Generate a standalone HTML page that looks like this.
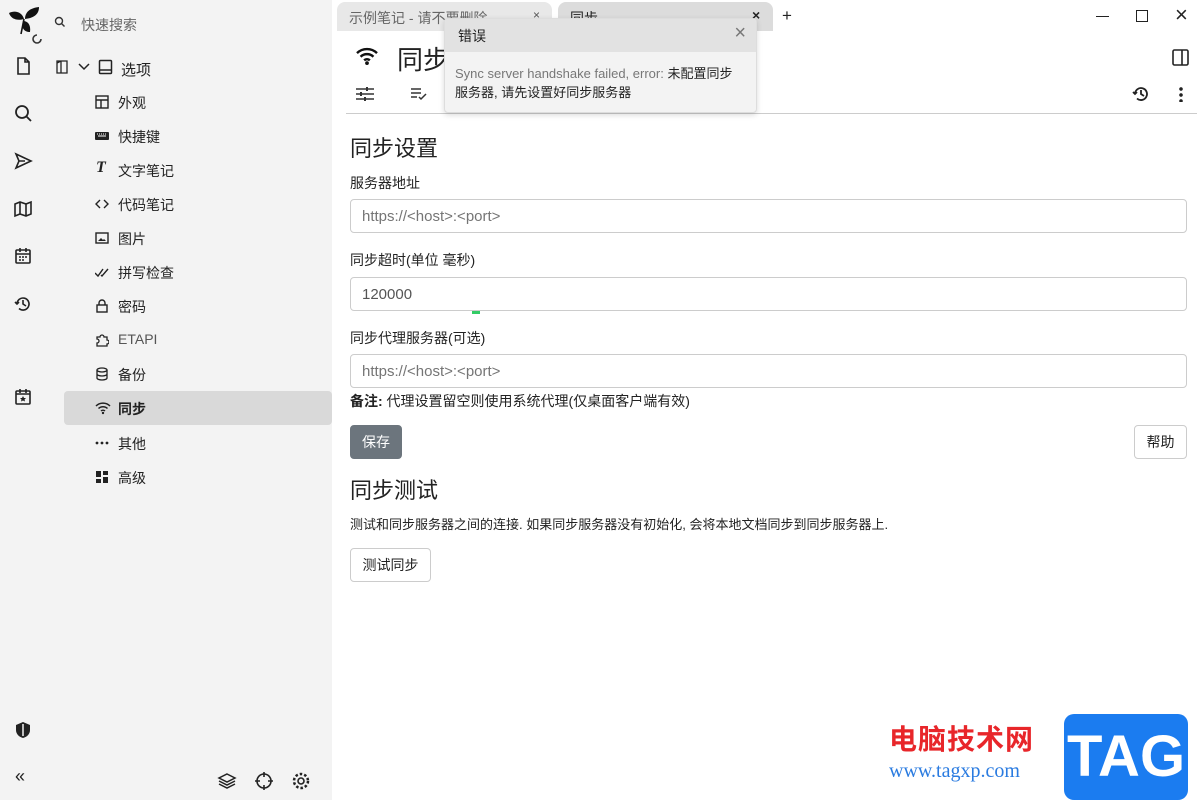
<!DOCTYPE html>
<html><head><meta charset="utf-8"><style>
*{box-sizing:border-box;margin:0;padding:0}
body{width:1200px;height:800px;overflow:hidden;background:#fff;font-family:"Liberation Sans","Noto Sans CJK SC",sans-serif;color:#222;position:relative;font-size:14px}
.side{position:absolute;left:0;top:0;width:332px;height:800px;background:#f3f3f3}
.ic{position:absolute;left:13px;width:20px;height:20px}
.t{position:absolute;font-size:14px;color:#222}
.item{position:absolute;left:64px;width:268px;height:34px}
.item svg{position:absolute;left:31px;top:10px}
.item span{position:absolute;left:54px;top:8px;font-size:14px}
.tab{position:absolute;top:2px;height:29px;border-radius:8px 8px 0 0;font-size:14px}
input{position:absolute;left:350px;width:837px;height:34px;border:1px solid #ccc;border-radius:4px;padding:0 11px;font-size:15px;font-family:inherit;color:#555}
.lbl{position:absolute;left:350px;font-size:14px}
.btn{position:absolute;border:1px solid #ccc;border-radius:4px;font-size:14px;text-align:center;background:#fff}
</style></head><body>
<div class="side">
 <svg style="position:absolute;left:8px;top:5px" width="38" height="42" viewBox="0 0 38 42"><path d="M1 8c6-3 13-1 15 6-7 2-13 0-15-6z" fill="#111"/><path d="M17 14c0-7 5-11 14-12 0 8-6 11-14 12z" fill="#111"/><path d="M15 16c5 0 8 4 7 11-6 0-9-4-7-11z" fill="#111"/><path d="M16 14l-3 15" stroke="#111" stroke-width="1.6"/><path d="M33 34a4 4 0 1 1-4-4M25 34a4 4 0 0 0 4 4" fill="none" stroke="#333" stroke-width="1.6"/></svg>
 <svg style="position:absolute;left:54px;top:16px" width="12" height="12" viewBox="0 0 12 12"><circle cx="5" cy="5" r="3.5" fill="none" stroke="#333" stroke-width="1.4"/><path d="M7.5 7.5l3 3" stroke="#333" stroke-width="1.4"/></svg>
 <div class="t" style="left:81px;top:15px;color:#666">快速搜索</div>
 <svg class="ic" style="top:56px" viewBox="0 0 20 20"><path d="M5 2h7l4 4v12H5z M12 2v4h4" fill="none" stroke="#222" stroke-width="1.6"/></svg>
 <svg class="ic" style="top:103px" viewBox="0 0 20 20"><circle cx="9" cy="9" r="6" fill="none" stroke="#222" stroke-width="1.8"/><path d="M13 13l5 5" stroke="#222" stroke-width="1.8"/></svg>
 <svg class="ic" style="top:151px" viewBox="0 0 20 20"><path d="M3 3l15 7-15 7 3-7z M6 10h6" fill="none" stroke="#222" stroke-width="1.6"/></svg>
 <svg class="ic" style="top:199px" viewBox="0 0 20 20"><path d="M2 5l5-2 6 2 5-2v12l-5 2-6-2-5 2z M7 3v12 M13 5v12" fill="none" stroke="#222" stroke-width="1.6"/></svg>
 <svg class="ic" style="top:246px" viewBox="0 0 20 20"><rect x="3" y="4" width="14" height="13" rx="1" fill="none" stroke="#222" stroke-width="1.6"/><path d="M3 8h14M7 2v4M13 2v4" stroke="#222" stroke-width="1.6"/><path d="M6 11h2M9 11h2M12 11h2M6 14h2M9 14h2" stroke="#222" stroke-width="1.4"/></svg>
 <svg class="ic" style="top:294px" viewBox="0 0 20 20"><path d="M4 10a6 6 0 1 1 2 4.5 M2 8l2 2 2-2 M10 6v4l3 2" fill="none" stroke="#222" stroke-width="1.6"/></svg>
 <svg class="ic" style="top:387px" viewBox="0 0 20 20"><rect x="3" y="4" width="14" height="13" rx="1" fill="none" stroke="#222" stroke-width="1.6"/><path d="M3 7h14M7 2v4M13 2v4" stroke="#222" stroke-width="1.6"/><path d="M10 9l1 2h2l-1.5 1.5.5 2-2-1-2 1 .5-2L7 11h2z" fill="#222"/></svg>
 <svg class="ic" style="top:720px" viewBox="0 0 20 20"><path d="M10 2l7 3v5c0 4-3 7-7 8-4-1-7-4-7-8V5z" fill="#222"/><path d="M10 4v12" stroke="#f3f3f3" stroke-width="1.5"/></svg>
 <div class="t" style="left:15px;top:766px;font-size:18px">«</div>
 <svg style="position:absolute;left:217px;top:771px" width="20" height="20" viewBox="0 0 20 20"><path d="M10 3l8 4-8 4-8-4z M2 10l8 4 8-4 M2 13l8 4 8-4" fill="none" stroke="#222" stroke-width="1.5"/></svg>
 <svg style="position:absolute;left:254px;top:771px" width="20" height="20" viewBox="0 0 20 20"><circle cx="10" cy="10" r="7" fill="none" stroke="#222" stroke-width="1.6"/><path d="M10 1v5M10 14v5M1 10h5M14 10h5" stroke="#222" stroke-width="1.6"/></svg>
 <svg style="position:absolute;left:291px;top:771px" width="20" height="20" viewBox="0 0 20 20"><circle cx="10" cy="10" r="3" fill="none" stroke="#222" stroke-width="1.6"/><circle cx="10" cy="10" r="7" fill="none" stroke="#222" stroke-width="2.5" stroke-dasharray="2.5 2"/></svg>
 <svg style="position:absolute;left:56px;top:60px" width="12" height="14" viewBox="0 0 12 14"><path d="M1 1h10v12H1z M5 1v12 M5 1l-4 2v10" fill="none" stroke="#222" stroke-width="1.3"/></svg>
 <svg style="position:absolute;left:78px;top:63px" width="12" height="8" viewBox="0 0 12 8"><path d="M1 1l5 5 5-5" fill="none" stroke="#222" stroke-width="1.5"/></svg>
 <svg style="position:absolute;left:98px;top:59px" width="15" height="16" viewBox="0 0 15 16"><rect x="1.5" y="1.5" width="12" height="13" rx="1" fill="none" stroke="#222" stroke-width="1.5"/><path d="M1.5 11h12" stroke="#222" stroke-width="1.5"/></svg>
 <div class="t" style="left:121px;top:59px;font-size:15px">选项</div>
 <div class="item" style="top:85px"><svg width="14" height="14" viewBox="0 0 14 14"><rect x="1" y="1" width="12" height="12" fill="none" stroke="#222" stroke-width="1.4"/><path d="M1 5h12M6 5v8" stroke="#222" stroke-width="1.4"/></svg><span>外观</span></div>
 <div class="item" style="top:119px"><svg width="14" height="14" viewBox="0 0 14 14"><rect x="0" y="3" width="14" height="8" rx="1" fill="#222"/><path d="M2 5h1M4 5h1M6 5h1M8 5h1M10 5h1M3 7h8" stroke="#fff"/></svg><span>快捷键</span></div>
 <div class="item" style="top:153px"><span style="left:32px;top:6px;font-family:'Liberation Serif';font-style:italic;font-weight:bold;font-size:16px">T</span><span>文字笔记</span></div>
 <div class="item" style="top:187px"><svg width="14" height="14" viewBox="0 0 14 14"><path d="M5 3L1 7l4 4M9 3l4 4-4 4" fill="none" stroke="#222" stroke-width="1.4"/></svg><span>代码笔记</span></div>
 <div class="item" style="top:221px"><svg width="14" height="14" viewBox="0 0 14 14"><rect x="1" y="2" width="12" height="10" fill="none" stroke="#222" stroke-width="1.4"/><path d="M3 10l3-3 2 2 1-1 2 2z" fill="#222"/></svg><span>图片</span></div>
 <div class="item" style="top:255px"><svg width="16" height="14" viewBox="0 0 16 14"><path d="M0 8l3 3 5-7M6 10l1 1 6-7" fill="none" stroke="#222" stroke-width="1.4"/></svg><span>拼写检查</span></div>
 <div class="item" style="top:289px"><svg width="14" height="14" viewBox="0 0 14 14"><rect x="2" y="6" width="10" height="7" fill="none" stroke="#222" stroke-width="1.4"/><path d="M4 6V4a3 3 0 0 1 6 0v2" fill="none" stroke="#222" stroke-width="1.4"/></svg><span>密码</span></div>
 <div class="item" style="top:323px"><svg width="14" height="14" viewBox="0 0 14 14"><path d="M2 4h3a2 2 0 0 1 4 0h3v3a2 2 0 0 1 0 4v2H2v-3a2 2 0 0 0 0-4z" fill="none" stroke="#222" stroke-width="1.3"/></svg><span style="color:#555">ETAPI</span></div>
 <div class="item" style="top:357px"><svg width="14" height="14" viewBox="0 0 14 14"><ellipse cx="7" cy="3" rx="5" ry="2" fill="none" stroke="#222" stroke-width="1.3"/><path d="M2 3v8c0 1 2 2 5 2s5-1 5-2V3M2 7c0 1 2 2 5 2s5-1 5-2" fill="none" stroke="#222" stroke-width="1.3"/></svg><span>备份</span></div>
 <div class="item" style="top:391px;background:#d9d9d9;border-radius:4px"><svg width="16" height="14" viewBox="0 0 16 14"><path d="M1 5a10 10 0 0 1 14 0M3.5 7.5a6.5 6.5 0 0 1 9 0M6 10a3 3 0 0 1 4 0" fill="none" stroke="#222" stroke-width="1.5"/><circle cx="8" cy="12" r="1.2" fill="#222"/></svg><span style="font-weight:bold">同步</span></div>
 <div class="item" style="top:426px"><svg width="14" height="14" viewBox="0 0 14 14"><circle cx="2" cy="7" r="1.4" fill="#222"/><circle cx="7" cy="7" r="1.4" fill="#222"/><circle cx="12" cy="7" r="1.4" fill="#222"/></svg><span>其他</span></div>
 <div class="item" style="top:460px"><svg width="14" height="14" viewBox="0 0 14 14"><rect x="1" y="1" width="5" height="6" fill="#222"/><rect x="8" y="1" width="5" height="4" fill="#222"/><rect x="1" y="9" width="5" height="4" fill="#222"/><rect x="8" y="7" width="5" height="6" fill="#222"/></svg><span>高级</span></div>
</div>
<div class="tab" style="left:337px;width:215px;background:#e8e8e8"><span style="position:absolute;left:12px;top:6px;color:#666">示例笔记 - 请不要删除</span><span style="position:absolute;left:196px;top:6px;font-size:12px;color:#555">×</span></div>
<div class="tab" style="left:558px;width:215px;background:#dcdcdc"><span style="position:absolute;left:12px;top:6px">同步</span><span style="position:absolute;left:194px;top:5px;font-size:14px;font-weight:bold">×</span></div>
<div class="t" style="left:782px;top:6px;font-size:17px">+</div>
<div style="position:absolute;left:1096px;top:16px;width:13px;border-top:1.5px solid #222"></div>
<div style="position:absolute;left:1136px;top:10px;width:12px;height:12px;border:1.5px solid #222"></div>
<div class="t" style="left:1175px;top:2px;font-size:22px">×</div>
<svg style="position:absolute;left:355px;top:46px" width="24" height="20" viewBox="0 0 16 14"><path d="M1 5a10 10 0 0 1 14 0M3.5 7.5a6.5 6.5 0 0 1 9 0M6 10a3 3 0 0 1 4 0" fill="none" stroke="#111" stroke-width="1.7"/><circle cx="8" cy="12" r="1.3" fill="#111"/></svg>
<div class="t" style="left:397px;top:40px;font-size:26px">同步</div>
<svg style="position:absolute;left:1172px;top:49px" width="17" height="17" viewBox="0 0 17 17"><rect x="1" y="1" width="15" height="15" rx="1.5" fill="none" stroke="#222" stroke-width="1.6"/><path d="M10 1v15" stroke="#222" stroke-width="1.6"/></svg>
<svg style="position:absolute;left:355px;top:85px" width="20" height="18" viewBox="0 0 20 18"><path d="M1 4h18M1 9h18M1 14h18" stroke="#333" stroke-width="1.6"/><path d="M12 2v4M6 7v4M10 12v4" stroke="#333" stroke-width="2"/></svg>
<svg style="position:absolute;left:410px;top:87px" width="18" height="14" viewBox="0 0 18 14"><path d="M1 2h10M1 6h10M1 10h6M9 10l2 2 5-5" fill="none" stroke="#333" stroke-width="1.5"/></svg>
<svg style="position:absolute;left:1131px;top:84px" width="20" height="20" viewBox="0 0 20 20"><path d="M4 10a6 6 0 1 1 2 4.5 M2 8l2 2 2-2 M10 6v4l3 2" fill="none" stroke="#222" stroke-width="1.8"/></svg>
<div style="position:absolute;left:1179px;top:86px;width:4px;height:16px;background:radial-gradient(circle,#222 1.6px,transparent 2px) 0 0/4px 6px"></div>
<div style="position:absolute;left:346px;top:113px;width:851px;border-top:1px solid #ccc"></div>
<div class="t" style="left:350px;top:131px;font-size:22px">同步设置</div>
<div class="lbl" style="top:173px">服务器地址</div>
<input style="top:199px" placeholder="https://<host>:<port>">
<div class="lbl" style="top:250px">同步超时(单位 毫秒)</div>
<input style="top:277px" value="120000">
<div style="position:absolute;left:472px;top:311px;width:8px;height:3px;background:#3c6"></div>
<div class="lbl" style="top:328px">同步代理服务器(可选)</div>
<input style="top:354px" placeholder="https://<host>:<port>">
<div class="lbl" style="top:391px"><b>备注:</b> 代理设置留空则使用系统代理(仅桌面客户端有效)</div>
<div class="btn" style="left:350px;top:425px;width:52px;height:34px;background:#6c757d;border-color:#6c757d;color:#fff;line-height:32px">保存</div>
<div class="btn" style="left:1134px;top:425px;width:53px;height:34px;line-height:32px">帮助</div>
<div class="t" style="left:350px;top:473px;font-size:22px">同步测试</div>
<div class="lbl" style="top:514px;font-size:13px">测试和同步服务器之间的连接. 如果同步服务器没有初始化, 会将本地文档同步到同步服务器上.</div>
<div class="btn" style="left:350px;top:548px;width:81px;height:34px;line-height:32px">测试同步</div>
<div style="position:absolute;left:444px;top:18px;width:313px;height:95px;background:#f3f3f3;border:1px solid #ddd;border-radius:4px;box-shadow:0 2px 6px rgba(0,0,0,.15);overflow:hidden">
 <div style="height:33px;background:#e2e2e2;padding:7px 13px;font-size:14px">错误<span style="position:absolute;right:10px;top:3px;font-size:20px;color:#777">×</span></div>
 <div style="padding:12px 20px 12px 10px;font-size:13px;line-height:19px;color:#222"><span style="color:#777">Sync server handshake failed, error:</span> 未配置同步服务器, 请先设置好同步服务器</div>
</div>
<div class="t" style="left:889px;top:718px;font-size:28px;font-weight:bold;color:#e8262a;letter-spacing:1px">电脑技术网</div>
<div class="t" style="left:889px;top:760px;font-size:20px;color:#2a7be0;font-family:'Liberation Serif',serif">www.tagxp.com</div>
<div style="position:absolute;left:1064px;top:714px;width:124px;height:86px;background:#1b7cf0;border-radius:10px;color:#fff;font-size:58px;font-weight:bold;text-align:center;line-height:86px">TAG</div>
</body></html>
